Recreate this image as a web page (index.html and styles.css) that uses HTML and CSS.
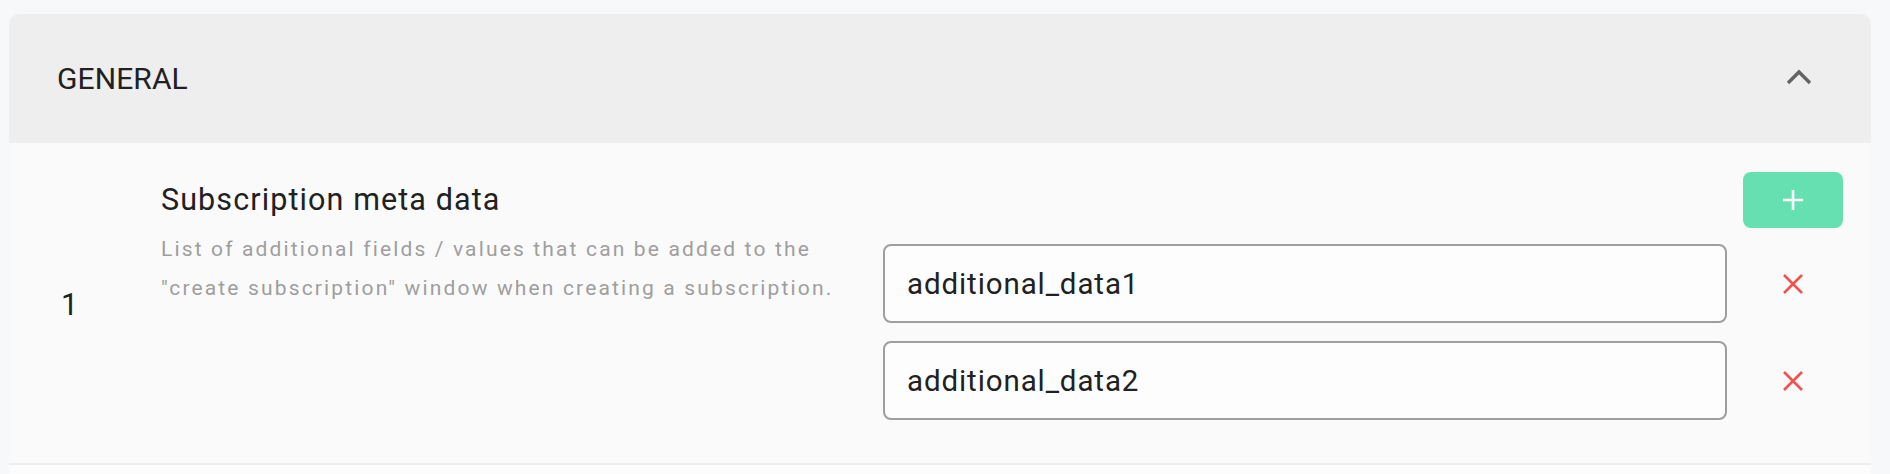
FILE: index.html
```html
<!DOCTYPE html>
<html lang="en">
<head>
<meta charset="utf-8">
<title>General settings</title>
<link rel="stylesheet" href="styles.css">
</head>
<body>
<div class="page">
  <section class="card">
    <header class="card-header">
      <h2 class="card-title">GENERAL</h2>
      <button class="chevron" aria-label="Collapse">
        <svg width="26" height="16" viewBox="0 0 26 16"><polyline points="2,14 13,3 24,14" fill="none" stroke="#646464" stroke-width="3.4"/></svg>
      </button>
    </header>
    <div class="card-body">
      <div class="row">
        <div class="num">1</div>
        <div class="label">
          <div class="label-title">Subscription meta data</div>
          <div class="label-desc">List of additional fields / values that can be added to the<br>"create subscription" window when creating a subscription.</div>
        </div>
        <div class="fields">
          <div class="spacer"></div>
          <button class="add-btn" aria-label="Add">
            <svg width="22" height="22" viewBox="0 0 22 22"><path d="M11 1v20M1 11h20" stroke="#fff" stroke-width="2.6" fill="none"/></svg>
          </button>
          <div class="input">additional_data1</div>
          <button class="remove" aria-label="Remove">
            <svg width="22" height="22" viewBox="0 0 22 22"><path d="M2 2l18 18M20 2L2 20" stroke="#ef5350" stroke-width="2.6" fill="none"/></svg>
          </button>
          <div class="input input-second">additional_data2</div>
          <button class="remove remove-second" aria-label="Remove">
            <svg width="22" height="22" viewBox="0 0 22 22"><path d="M2 2l18 18M20 2L2 20" stroke="#ef5350" stroke-width="2.6" fill="none"/></svg>
          </button>
        </div>
      </div>
    </div>
  </section>
  <div class="next-card"></div>
</div>
</body>
</html>
```
FILE: styles.css
```css
* { box-sizing: border-box; }
html, body {
  margin: 0;
  padding: 0;
  background: #f7f8fa;
  font-family: Roboto, "Liberation Sans", Arial, sans-serif;
  color: #212121;
}
.page {
  padding: 14px 19px 0 9px;
}
.card {
  background: #fafafa;
  border-radius: 10px 10px 0 0;
  overflow: hidden;
  border-bottom: 2px solid #eeeeee;
}
.card-header {
  height: 129px;
  background: #eeeeee;
  display: flex;
  align-items: center;
  justify-content: space-between;
  padding: 0 59px 0 48px;
}
.card-title {
  margin: 0;
  font-size: 30px;
  font-weight: 400;
  color: #212121;
  letter-spacing: 0.1px;
}
.chevron {
  border: 0;
  background: transparent;
  padding: 0;
  display: flex;
  margin-top: -3px;
}
.card-body {
  padding: 29px 28px 43px 0;
}
.row {
  display: flex;
  align-items: flex-start;
}
.num {
  width: 152px;
  padding-left: 52px;
  font-size: 30.5px;
  line-height: 36px;
  align-self: center;
  margin-top: 18px;
}
.label {
  width: 722px;
  padding-top: 10px;
}
.label-title {
  font-size: 30.5px;
  line-height: 36px;
  letter-spacing: 1.1px;
  color: #212121;
}
.label-desc {
  margin-top: 12px;
  font-size: 21px;
  line-height: 39px;
  color: #9e9e9e;
  letter-spacing: 2.15px;
}
.fields {
  flex: 1;
  display: grid;
  grid-template-columns: 844px 100px;
  column-gap: 16px;
  row-gap: 16px;
}
.input-second, .remove-second { margin-top: 2px; }
.add-btn {
  width: 100px;
  height: 56px;
  border: 0;
  border-radius: 8px;
  background: #66e0b1;
  display: flex;
  align-items: center;
  justify-content: center;
  padding: 0;
}
.input {
  height: 79px;
  border: 2px solid #9e9e9e;
  border-radius: 8px;
  background: #fdfdfd;
  display: flex;
  align-items: center;
  padding: 0 22px;
  font-size: 29.5px;
  letter-spacing: 0.9px;
  color: #212121;
}
.remove {
  border: 0;
  background: transparent;
  padding: 0;
  display: flex;
  align-items: center;
  justify-content: center;
}
.next-card {
  height: 20px;
  background: #fcfcfc;
}
```
